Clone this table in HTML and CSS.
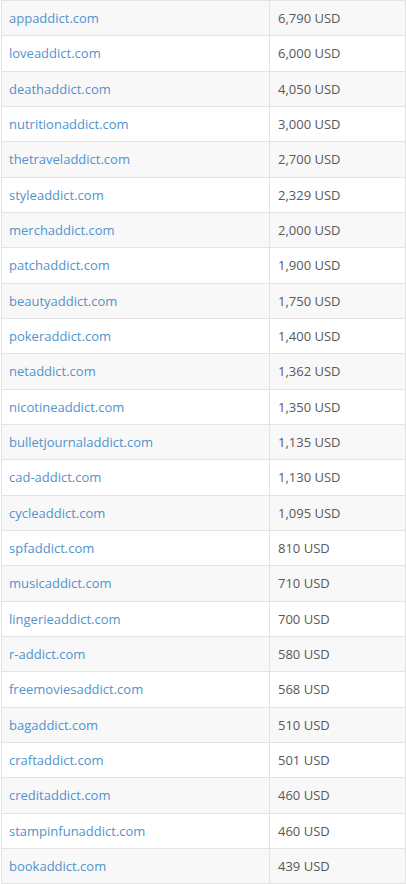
FILE: index.html
```html
<!DOCTYPE html>
<html>
<head>
<meta charset="utf-8">
<link rel="stylesheet" href="styles.css">
</head>
<body>
<table class="prices">
<tbody>
<tr><td class="domain"><a href="#">appaddict.com</a></td><td class="price">6,790 USD</td></tr>
<tr><td class="domain"><a href="#">loveaddict.com</a></td><td class="price">6,000 USD</td></tr>
<tr><td class="domain"><a href="#">deathaddict.com</a></td><td class="price">4,050 USD</td></tr>
<tr><td class="domain"><a href="#">nutritionaddict.com</a></td><td class="price">3,000 USD</td></tr>
<tr><td class="domain"><a href="#">thetraveladdict.com</a></td><td class="price">2,700 USD</td></tr>
<tr><td class="domain"><a href="#">styleaddict.com</a></td><td class="price">2,329 USD</td></tr>
<tr><td class="domain"><a href="#">merchaddict.com</a></td><td class="price">2,000 USD</td></tr>
<tr><td class="domain"><a href="#">patchaddict.com</a></td><td class="price">1,900 USD</td></tr>
<tr><td class="domain"><a href="#">beautyaddict.com</a></td><td class="price">1,750 USD</td></tr>
<tr><td class="domain"><a href="#">pokeraddict.com</a></td><td class="price">1,400 USD</td></tr>
<tr><td class="domain"><a href="#">netaddict.com</a></td><td class="price">1,362 USD</td></tr>
<tr><td class="domain"><a href="#">nicotineaddict.com</a></td><td class="price">1,350 USD</td></tr>
<tr><td class="domain"><a href="#">bulletjournaladdict.com</a></td><td class="price">1,135 USD</td></tr>
<tr><td class="domain"><a href="#">cad-addict.com</a></td><td class="price">1,130 USD</td></tr>
<tr><td class="domain"><a href="#">cycleaddict.com</a></td><td class="price">1,095 USD</td></tr>
<tr><td class="domain"><a href="#">spfaddict.com</a></td><td class="price">810 USD</td></tr>
<tr><td class="domain"><a href="#">musicaddict.com</a></td><td class="price">710 USD</td></tr>
<tr><td class="domain"><a href="#">lingerieaddict.com</a></td><td class="price">700 USD</td></tr>
<tr><td class="domain"><a href="#">r-addict.com</a></td><td class="price">580 USD</td></tr>
<tr><td class="domain"><a href="#">freemoviesaddict.com</a></td><td class="price">568 USD</td></tr>
<tr><td class="domain"><a href="#">bagaddict.com</a></td><td class="price">510 USD</td></tr>
<tr><td class="domain"><a href="#">craftaddict.com</a></td><td class="price">501 USD</td></tr>
<tr><td class="domain"><a href="#">creditaddict.com</a></td><td class="price">460 USD</td></tr>
<tr><td class="domain"><a href="#">stampinfunaddict.com</a></td><td class="price">460 USD</td></tr>
<tr><td class="domain"><a href="#">bookaddict.com</a></td><td class="price">439 USD</td></tr>
</tbody>
</table>
</body>
</html>
```

FILE: styles.css
```css
html, body {
  margin: 0;
  padding: 0;
  background: #ffffff;
}

body {
  font-family: "Open Sans", "Liberation Sans", sans-serif;
  font-size: 13px;
  color: #555555;
}

.prices {
  border-collapse: collapse;
  width: 405px;
  margin-left: 1px;
  table-layout: fixed;
}

.prices td {
  border: 1px solid #e3e3e3;
  padding: 8px 8px;
  line-height: 18.33px;
  text-align: left;
  vertical-align: middle;
  white-space: nowrap;
}

.prices tr:nth-child(odd) td {
  background: #f8f8f8;
}

.prices tr:nth-child(even) td {
  background: #ffffff;
}

.prices td.domain {
  width: 252px;
  padding-left: 7px;
}

.domain a {
  color: #5293cc;
  text-decoration: none;
}

.price {
  color: #595959;
}
```
